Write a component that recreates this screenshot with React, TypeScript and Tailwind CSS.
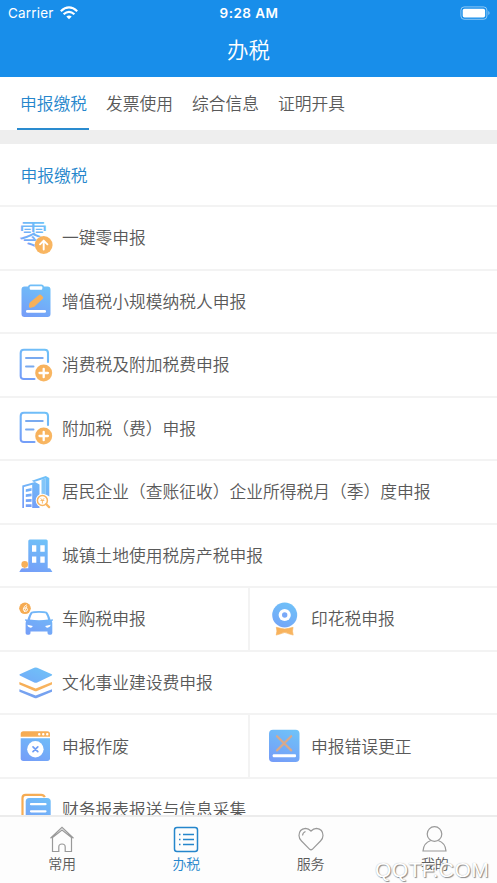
import type { ReactNode } from 'react';
import clsx from 'clsx';

const BLUE = 'url(#blue)';
const ORANGE = 'url(#orange)';

function Defs() {
  return (
    <svg className="absolute h-0 w-0" aria-hidden>
      <defs>
        <linearGradient id="blue" gradientUnits="userSpaceOnUse" x1="24" y1="0" x2="10" y2="34">
          <stop offset="0" stopColor="#6fc2f8" />
          <stop offset="1" stopColor="#759df8" />
        </linearGradient>
        <linearGradient id="orange" gradientUnits="userSpaceOnUse" x1="0" y1="0" x2="34" y2="34">
          <stop offset="0" stopColor="#f5a94f" />
          <stop offset="1" stopColor="#f9b865" />
        </linearGradient>
      </defs>
    </svg>
  );
}

function Icon({ children }: { children: ReactNode }) {
  return (
    <svg viewBox="0 0 34 34" className="h-[34px] w-[34px] shrink-0 overflow-visible" fill="none">
      {children}
    </svg>
  );
}

function ZeroIcon() {
  return (
    <Icon>
      <text x="-.2" y="24.500" fontSize="29" fontWeight="400" fontFamily="'Noto Sans CJK SC', sans-serif" fill={BLUE}>零</text>
      <circle cx="24.700" cy="24" r="9.200" fill="#fff" />
      <circle cx="24.700" cy="24" r="8.900" fill={ORANGE} />
      <path d="M24.700 28.500v-8.500M21 23.300l3.700-3.700 3.700 3.700" stroke="#fff" strokeWidth="1.900" strokeLinecap="round" strokeLinejoin="round" />
    </Icon>
  );
}

function ClipboardIcon() {
  return (
    <Icon>
      <path d="M5.500 2.500H9Q9.500.5 11.500.5h11q2 0 2.500 2h3.500q3 0 3 3V30q0 3-3 3h-23q-3 0-3-3V5.500q0-3 3-3z" fill={BLUE} />
      <rect x="10.700" y="2.200" width="12.600" height="3.600" rx="1" fill="#fff" />
      <path d="M11.300 22.500l.5-3 9.300-7.600 1.700 1.800-8.500 8z" fill={ORANGE} stroke={ORANGE} strokeWidth="2.800" strokeLinejoin="round" />
      <rect x="7" y="26" width="20" height="2.700" rx="1.300" fill="#fff" />
    </Icon>
  );
}

function FormPlusIcon() {
  return (
    <Icon>
      <path d="M15.500 31H4.800Q1.700 31 1.700 28V5q0-3.200 3.100-3.200h20.900q3.300 0 3.300 3.200v9" stroke={BLUE} strokeWidth="2.100" strokeLinecap="round" />
      <path d="M7 9.900h16.700M7 18.500h7.500" stroke="#79aaf0" strokeWidth="2" strokeLinecap="round" />
      <circle cx="24.700" cy="25" r="8.500" fill={ORANGE} />
      <path d="M24.700 20.800v8.400M20.500 25h8.400" stroke="#fff" strokeWidth="2.300" strokeLinecap="round" />
    </Icon>
  );
}

function OfficeIcon() {
  return (
    <Icon>
      <path d="M12.800 5.700L26.800 1l3.500 2v18.500l-3.500-2V3.200L15 7z" fill={BLUE} />
      <path d="M22.500 4.800L26.800 3v17h-4.300z" fill="#83c6f9" />
      <path d="M3.300 10.500L16 7l4.500 2.400v10q-3.700 4.600-1.500 9.600l1.500 1.700V33H3.300z" fill={BLUE} />
      <path d="M5 12l8.200-2.200V33H5z" fill="#fff" />
      <path d="M6.800 14.300l5.800-1.400v2.800l-5.800 1.200zM6.800 19.300l5.800-.9v2.800l-5.800.7zM6.800 24.300l5.800-.4v2.800l-5.800.2zM6.800 29.200h5.800V32H6.800z" fill={BLUE} />
      <circle cx="23.400" cy="25.500" r="6.700" fill="#fff" />
      <circle cx="23.400" cy="25.500" r="5" stroke={ORANGE} strokeWidth="1.500" />
      <path d="M27.300 29.300l2.800 2.800" stroke={ORANGE} strokeWidth="2.300" strokeLinecap="round" />
      <path d="M21.700 23.300l1.700 2 1.700-2M21.500 25.500h3.800M23.400 25.500v3" stroke={ORANGE} strokeWidth=".9" />
    </Icon>
  );
}

function TowerIcon() {
  return (
    <Icon>
      <path d="M9.300 2q0-1.500 1.500-1.500h16.400q1.500 0 1.500 1.500v27.300h1.500q1 0 1.500 1l1.700 2.700H.3l1.600-2.700q.5-1 1.600-1h5.800z" fill={BLUE} />
      <path d="M13 6.300h4.300v6.400H13zM21.300 6.300h4.400v6.400h-4.400zM13 17.500h4.300v6.300H13zM21.300 17.500h4.400v6.300h-4.400z" fill="#fff" />
      <circle cx="5.700" cy="25.400" r="3.300" fill={ORANGE} />
      <path d="M5.700 25v4.500" stroke={ORANGE} />
    </Icon>
  );
}

function CarIcon() {
  return (
    <Icon>
      <path d="M12.400 9.700q1-.6 7.600-.6t7.600.6q1.700.7 4.200 8.600 1.500.7 1.500 2.700v10q0 1.700-1.600 1.700h-1.500q-1.700 0-1.700-1.700v-1.500h-17V31q0 1.700-1.700 1.700H8.200q-1.600 0-1.600-1.700V21q0-2 1.600-2.700 2.500-7.900 4.200-8.600z" fill={BLUE} />
      <path d="M13.500 11.200q6.500-.8 13 0 1.500 2.100 2.600 6.300-9 1.300-18.200 0 1-4.200 2.600-6.300z" fill="#fff" />
      <path d="M8.300 22.800l5.500 1.300q-.7 2-3 1.500-2.200-.5-2.500-2.800zM31.700 22.800l-5.500 1.300q.7 2 3 1.500 2.200-.5 2.500-2.800z" fill="#fff" />
      <path d="M6.700 18l2.300.8M33.300 18l-2.300.8" stroke={BLUE} strokeWidth="1.500" strokeLinecap="round" />
      <circle cx="6" cy="6.300" r="5.800" fill={ORANGE} />
      <path d="M7.600 2.800Q4.800 3.800 4.300 7M7.700 4.500L5.500 9.500" stroke="#fff" strokeWidth=".9" strokeLinecap="round" />
      <ellipse cx="6.500" cy="7.600" rx="2" ry="1.800" stroke="#fff" strokeWidth=".9" />
    </Icon>
  );
}

function MedalIcon() {
  return (
    <Icon>
      <circle cx="16.700" cy="13" r="12.500" fill={BLUE} />
      <circle cx="16.700" cy="13" r="6.100" fill="#fff" />
      <circle cx="16.700" cy="13" r="2.700" fill="#7aa9f8" />
      <path d="M8.300 25.300l4.300 1q4 1.200 8.200 0l4.300-1-.6 3.800.7 4-4.500-1.300q-4-2.600-8 0l-4.500 1.300.7-4z" fill={ORANGE} stroke={ORANGE} strokeWidth=".6" strokeLinejoin="round" />
    </Icon>
  );
}

function LayersIcon() {
  return (
    <Icon>
      <path d="M15.200 1.800q1.500-.8 3 0L32.800 8.300q.8.600 0 1.200l-14.600 6.900q-1.500.6-3 0L.8 9.500q-.8-.6 0-1.200z" fill={BLUE} />
      <path d="M.4 16l16.300 6.500L33 16v2.500L18 25q-1.300.5-2.600 0L.4 18.500z" fill={ORANGE} />
      <path d="M.4 23.200l16.300 6.400L33 23.200v2.500L18 32q-1.300.5-2.600 0L.4 25.700z" fill="#76a2f0" />
    </Icon>
  );
}

function VoidIcon() {
  return (
    <Icon>
      <path d="M1.700 7.700V5q0-2.700 2.700-2.700h23.900Q31 2.300 31 5v2.700z" fill={ORANGE} />
      <path d="M20.200 5.200h.1M24.200 5.200h.1M28.200 5.200h.1" stroke="#fff" strokeWidth="2.400" strokeLinecap="round" />
      <path d="M1.700 9.300H31v20q0 2.700-2.700 2.700H4.400q-2.700 0-2.700-2.700z" fill={BLUE} />
      <circle cx="16.400" cy="20.200" r="8.200" fill="#fff" />
      <path d="M14 17.800l4.800 4.800M18.800 17.800L14 22.600" stroke="#6f9df5" strokeWidth="1.700" strokeLinecap="round" />
    </Icon>
  );
}

function CorrectIcon() {
  return (
    <Icon>
      <rect x="1" y=".7" width="30.500" height="32.300" rx="4" fill={BLUE} />
      <path d="M9 7.200l14.200 14.200M23.200 7.200L9 21.400" stroke="#d8a98b" strokeWidth="2.200" strokeLinecap="round" />
      <rect x="4.700" y="25.300" width="23.300" height="2.900" rx="1" fill="#fff" />
    </Icon>
  );
}

function ReportIcon() {
  return (
    <Icon>
      <path d="M3.500 30V5q0-3.200 3.200-3.200h15.500q2.600 0 3.600 2.400" stroke={ORANGE} strokeWidth="2.200" />
      <rect x="6.700" y="5" width="25" height="29" rx="3.500" fill={BLUE} />
      <path d="M12 11.200h14.500M12 18.300h14.500" stroke="#fff" strokeWidth="2.200" strokeLinecap="round" />
    </Icon>
  );
}

type Entry = { label: string; icon: ReactNode };

const TABS = ['申报缴税', '发票使用', '综合信息', '证明开具'];

const ROWS: Entry[][] = [
  [{ label: '一键零申报', icon: <ZeroIcon /> }],
  [{ label: '增值税小规模纳税人申报', icon: <ClipboardIcon /> }],
  [{ label: '消费税及附加税费申报', icon: <FormPlusIcon /> }],
  [{ label: '附加税（费）申报', icon: <FormPlusIcon /> }],
  [{ label: '居民企业（查账征收）企业所得税月（季）度申报', icon: <OfficeIcon /> }],
  [{ label: '城镇土地使用税房产税申报', icon: <TowerIcon /> }],
  [
    { label: '车购税申报', icon: <CarIcon /> },
    { label: '印花税申报', icon: <MedalIcon /> },
  ],
  [{ label: '文化事业建设费申报', icon: <LayersIcon /> }],
  [
    { label: '申报作废', icon: <VoidIcon /> },
    { label: '申报错误更正', icon: <CorrectIcon /> },
  ],
  [{ label: '财务报表报送与信息采集', icon: <ReportIcon /> }],
];

const NAV: { label: string; icon: ReactNode; active?: boolean }[] = [
  {
    label: '常用',
    icon: <path d="M1.500 13.300L13 2.300l11.500 11M3.500 12.500v14h6.300V22q0-3 3.200-3t3.200 3v4.500h6.300v-14L13 5z" />,
  },
  {
    label: '办税',
    active: true,
    icon: (
      <>
        <rect x="1.500" y="2.500" width="23" height="24" rx="2.500" strokeWidth="1.500" />
        <path d="M10 9.500h11M10 14.500h11M10 19.500h11" strokeWidth="1.700" />
        <path d="M6 9.500h1.500M6 14.500h1.500M6 19.500h1.500" strokeWidth="1.500" />
      </>
    ),
  },
  {
    label: '服务',
    icon: (
      <>
        <path d="M13 6Q10.500 3.300 7.500 3.300 1 4 1 10.500q0 3 2.500 5.500l8.200 8.300q1.300 1 2.600 0l8.200-8.300Q25 13.500 25 10.500 25 4 18.500 3.300 15.500 3.300 13 6z" />
        <path d="M4.500 10.500q.3-3 3-4" />
      </>
    ),
  },
  {
    label: '我的',
    icon: (
      <>
        <circle cx="12.500" cy="9" r="7.300" />
        <path d="M8.800 15.500Q1.500 18 1 26h23q-.5-8-7.800-10.500" />
      </>
    ),
  },
];

function StatusBar() {
  return (
    <div className="grid h-[26px] grid-cols-3 items-center pr-[7px] pl-2 font-['Inter',sans-serif] text-white">
      <div className="flex items-center gap-1.5">
        <span className="text-[13.500px] font-normal tracking-[0.2px]">Carrier</span>
        <svg viewBox="0 0 18 14" className="h-3.5 w-[18px]" fill="none" stroke="currentColor" strokeWidth="2.200">
          <path d="M.8 5.200q8.200-7.600 16.400 0M3.600 8.300q5.400-5 10.800 0" />
          <path d="M9 13.300L6.300 10.600q2.700-2.300 5.400 0z" fill="currentColor" stroke="none" />
        </svg>
      </div>
      <span className="text-center text-[13.500px] font-semibold tracking-[0.45px] whitespace-nowrap">9:28 AM</span>
      <svg viewBox="0 0 30 14" className="h-3.5 w-[30px] justify-self-end" fill="none">
        <rect x=".9" y=".9" width="26" height="12.400" rx="3.300" stroke="#fff" strokeOpacity=".5" />
        <rect x="2.700" y="2.700" width="22.400" height="8.800" rx="1.800" fill="#fff" />
        <path d="M28.300 5v4q1.300-.5 1.300-2t-1.300-2z" fill="#fff" fillOpacity=".5" />
      </svg>
    </div>
  );
}

export default function App() {
  return (
    <div className="relative flex h-[883px] w-[497px] flex-col overflow-hidden bg-white font-['Noto_Sans_CJK_SC',sans-serif] text-[16.750px] font-[350] text-[#595959]">
      <Defs />
      <header className="h-[77px] shrink-0 bg-[#188eea]">
        <StatusBar />
        <h1 className="text-center text-[21.500px] leading-[46px] font-[350] text-white">办税</h1>
      </header>

      <nav className="flex h-[53px] shrink-0 gap-[14px] pl-[17px]">
        {TABS.map((tab, i) => (
          <span
            key={tab}
            className={clsx(
              'flex w-[72px] items-center justify-center border-b-2 pt-0.5 pl-px whitespace-nowrap',
              i === 0 ? 'border-[#2a8bcf] text-[#2586cc]' : 'border-transparent',
            )}
          >
            {tab}
          </span>
        ))}
      </nav>
      <div className="h-[14px] shrink-0 bg-[#eeeeee]" />

      <main className="min-h-0 flex-1 overflow-hidden">
        <h2 className="flex h-[61px] items-center pt-0.5 pl-[20.500px] text-[#2586cc]">申报缴税</h2>
        {ROWS.map((row) => (
          <div key={row[0].label} className="flex h-[63.550px] border-t-2 border-[#f3f3f3]">
            {row.map((entry, i) => (
              <div
                key={entry.label}
                className={clsx(
                  'flex flex-1 items-center gap-[9px] whitespace-nowrap',
                  i > 0 ? 'border-l-2 border-[#f3f3f3] pl-[18px]' : 'pl-[19px]',
                )}
              >
                {entry.icon}
                <span>{entry.label}</span>
              </div>
            ))}
          </div>
        ))}
      </main>

      <footer className="grid h-[68px] shrink-0 grid-cols-4 border-t-2 border-[#ececec] bg-[#fdfdfd] text-sm">
        {NAV.map((item) => (
          <div key={item.label} className={clsx('flex flex-col items-center pt-2', item.active && 'text-[#2586cc]')}>
            <svg
              viewBox="0 0 26 28"
              className="h-7 w-[26px]"
              fill="none"
              stroke={item.active ? 'currentColor' : '#999'}
              strokeWidth="1.200"
            >
              {item.icon}
            </svg>
            <span className="leading-5">{item.label}</span>
          </div>
        ))}
      </footer>

      <span className="absolute top-[858px] left-[375px] font-['Liberation_Sans',sans-serif] text-[21px] leading-6 font-normal tracking-[0.4px] text-white [text-shadow:1px_1px_1px_#888,0_0_1px_#aaa]">
        QQTF.COM
      </span>
    </div>
  );
}
